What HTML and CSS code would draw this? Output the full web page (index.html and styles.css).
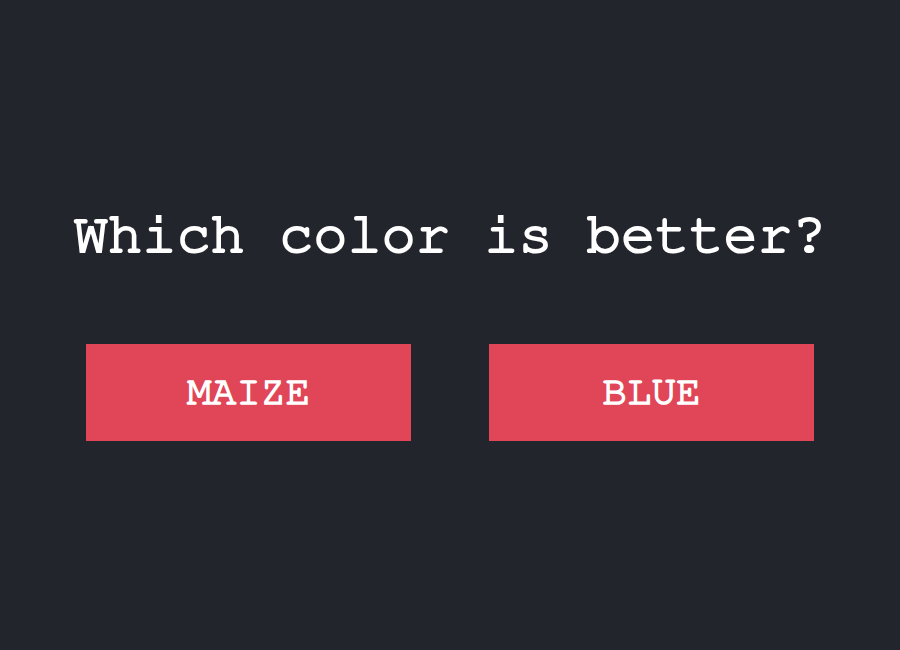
FILE: index.html
```html
<!DOCTYPE html>
<html>
<head>
<meta charset="utf-8">
<link rel="stylesheet" href="styles.css">
</head>
<body>
<main class="poll">
  <h1 class="question">Which color is better?</h1>
  <div class="choices">
    <button class="choice">MAIZE</button>
    <button class="choice">BLUE</button>
  </div>
</main>
</body>
</html>
```
FILE: styles.css
```css
html, body {
  margin: 0;
  padding: 0;
  height: 100%;
}
body {
  background: #23252c;
  font-family: "FreeMono", "Liberation Mono", monospace;
  color: #ffffff;
}
.poll {
  display: flex;
  flex-direction: column;
  align-items: center;
  padding-top: 200px;
}
.question {
  margin: 0 0 75px 0;
  font-size: 57px;
  font-weight: normal;
  -webkit-text-stroke: 2.2px #ffffff;
  line-height: 69px;
  text-align: center;
}
.choices {
  display: flex;
  gap: 78px;
}
.choice {
  width: 325px;
  height: 97px;
  border: none;
  background: #e04558;
  color: #ffffff;
  font-family: "FreeMono", "Liberation Mono", monospace;
  font-size: 41px;
  font-weight: normal;
  -webkit-text-stroke: 1.6px #ffffff;
  padding: 0 0 2px 0;
}
```
